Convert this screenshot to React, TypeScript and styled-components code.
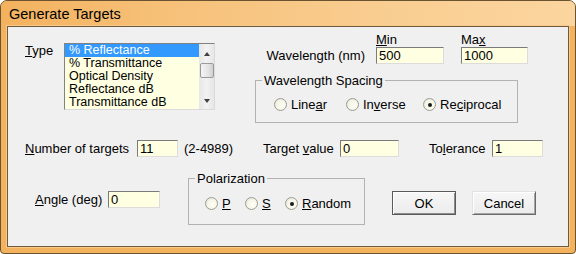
import { FC, ReactNode } from "react";
import styled, { createGlobalStyle } from "styled-components";

const GlobalStyle = createGlobalStyle`
    html, body {
        margin: 0;
        padding: 0;
        background: #ffffff;
    }
    body {
        font-family: "Liberation Sans", Arial, sans-serif;
        font-size: 13px;
        color: #000000;
    }
    * {
        box-sizing: border-box;
    }
`

const Window = styled.div`
    width: 576px;
    height: 254px;
    display: flex;
    flex-direction: column;
    border: 1px solid #6b5331;
    border-radius: 7px 7px 4px 4px;
    background: #f2b25e;
    overflow: hidden;
`

const TitleBar = styled.div`
    height: 25px;
    display: flex;
    align-items: center;
    padding-left: 8px;
    background: linear-gradient(90deg, #f3b25e 0%, #f6bf76 25%, #f9cd90 65%, #fbd59f 100%);
    font-size: 14.5px;
`

const Client = styled.div`
    flex: 1;
    margin: 0 6px 6px 6px;
    border: 1px solid #6e5a3c;
    box-shadow: 0 0 0 1px #f8c98a;
    background: #f0f0f0;
    display: flex;
    flex-direction: column;
`

const Row = styled.div<{ $top: number; $center?: boolean }>`
    display: flex;
    align-items: ${({ $center }) => ($center ? "center" : "flex-start")};
    margin-top: ${({ $top }) => $top}px;
`

const Group = styled.div<{ $left?: number; $top?: number; $column?: boolean }>`
    display: flex;
    flex-direction: ${({ $column }) => ($column ? "column" : "row")};
    align-items: flex-start;
    margin-left: ${({ $left }) => $left ?? 0}px;
    margin-top: ${({ $top }) => $top ?? 0}px;
`

const Label = styled.span<{ $w?: number; $left?: number; $right?: boolean; $h?: number }>`
    display: block;
    width: ${({ $w }) => ($w ? `${$w}px` : "auto")};
    height: ${({ $h }) => $h ?? 17}px;
    line-height: ${({ $h }) => $h ?? 17}px;
    margin-left: ${({ $left }) => $left ?? 0}px;
    text-align: ${({ $right }) => ($right ? "right" : "left")};
    padding-right: ${({ $right }) => ($right ? 11 : 0)}px;
    white-space: nowrap;
`

const TextBox = styled.input<{ $w: number; $left?: number }>`
    width: ${({ $w }) => $w}px;
    height: 17px;
    margin: 0 0 0 ${({ $left }) => $left ?? 0}px;
    padding: 0 0 0 2px;
    font: inherit;
    line-height: 15px;
    color: #000;
    background: #ffffe1;
    border: 1px solid;
    border-color: #7a7a7a #dcdcdc #dcdcdc #7a7a7a;
    outline: none;
`

const ListBox = styled.div`
    width: 151px;
    height: 67px;
    display: flex;
    border: 1px solid;
    border-color: #828282 #dadada #dadada #828282;
    background: #ffffe1;
`

const Items = styled.div`
    flex: 1;
    overflow: hidden;
`

const Item = styled.div<{ $selected?: boolean }>`
    height: 13px;
    line-height: 13px;
    font-size: 12.5px;
    padding-left: 4px;
    white-space: nowrap;
    background: ${({ $selected }) => ($selected ? "#3399ff" : "transparent")};
    color: ${({ $selected }) => ($selected ? "#ffffff" : "#000000")};
`

const ScrollBar = styled.div`
    width: 15px;
    display: flex;
    flex-direction: column;
    align-items: center;
    background: linear-gradient(90deg, #e6e6e6, #f2f2f2 50%, #e6e6e6);
`

const ArrowBox = styled.div<{ $h: number }>`
    height: ${({ $h }) => $h}px;
    width: 100%;
    display: flex;
    align-items: center;
    justify-content: center;
    flex-shrink: 0;
`

const Arrow = styled.div<{ $down?: boolean }>`
    width: 0;
    height: 0;
    border-left: 3.5px solid transparent;
    border-right: 3.5px solid transparent;
    border-top: ${({ $down }) => ($down ? "4px solid #404040" : "0")};
    border-bottom: ${({ $down }) => ($down ? "0" : "4px solid #404040")};
`

const Thumb = styled.div`
    width: 14px;
    height: 15px;
    flex-shrink: 0;
    border: 1px solid #9a9a9a;
    border-radius: 2px;
    background: linear-gradient(90deg, #f4f4f4, #e4e4e4 60%, #cfcfcf);
`

const Spacer = styled.div`
    flex: 1;
`

const GroupBox = styled.fieldset<{ $w: number; $left?: number; $top?: number; $pt: number; $pb: number }>`
    width: ${({ $w }) => $w}px;
    min-width: 0;
    margin: ${({ $top }) => $top ?? 0}px 0 0 ${({ $left }) => $left ?? 0}px;
    padding: ${({ $pt }) => $pt}px 6px ${({ $pb }) => $pb}px 6px;
    border: 1px solid #b2b2b2;
`

const Legend = styled.legend`
    padding: 0 2px;
    line-height: 15px;
    height: 15px;
`

const RadioRow = styled.div<{ $left: number }>`
    display: flex;
    margin-left: ${({ $left }) => $left}px;
`

const RadioItem = styled.label<{ $w?: number }>`
    display: flex;
    align-items: center;
    height: 15px;
    width: ${({ $w }) => ($w ? `${$w}px` : "auto")};
    white-space: nowrap;
`

const RadioDot = styled.span<{ $checked?: boolean }>`
    width: 13px;
    height: 13px;
    margin-right: 4px;
    border-radius: 50%;
    border: 1px solid #9c9c94;
    background: radial-gradient(circle at 60% 60%, #fffff6 0%, #f4f4e6 55%, #d8d8d0 100%);
    display: flex;
    align-items: center;
    justify-content: center;

    &::after {
        content: "";
        width: 4px;
        height: 4px;
        border-radius: 50%;
        background: ${({ $checked }) => ($checked ? "#1a1a1a" : "transparent")};
    }
`

const Button = styled.button<{ $primary?: boolean; $left?: number }>`
    width: 64px;
    height: 24px;
    margin-left: ${({ $left }) => $left ?? 0}px;
    padding: 0;
    font: inherit;
    color: #000;
    background: linear-gradient(#f7f7f7, #ececec);
    border: 1px solid;
    border-color: ${({ $primary }) =>
        $primary ? "#5a5a5a" : "#e2e2e2 #6a6a6a #6a6a6a #e2e2e2"};
    box-shadow: ${({ $primary }) =>
        $primary
            ? "inset 1px 1px #ffffff, inset -1px -1px #8c8c8c"
            : "inset 1px 1px #ffffff, inset -1px -1px #a6a6a6"};
`

interface IRadioProps {
    w?: number,
    checked?: boolean,
    children: ReactNode
}

const Radio: FC<IRadioProps> = ({ w, checked, children }) => (
    <RadioItem $w={w}>
        <RadioDot $checked={checked} />
        <span>{children}</span>
    </RadioItem>
)

const types = ["% Reflectance", "% Transmittance", "Optical Density", "Reflectance dB", "Transmittance dB"];

const App: FC = () => {
    return (
        <>
            <GlobalStyle />
            <Window>
                <TitleBar>Generate Targets</TitleBar>
                <Client>
                    <Row $top={5}>
                        <Group $left={17} $top={11}>
                            <Label $w={39} $h={15}><u>T</u>ype</Label>
                            <ListBox>
                                <Items>
                                    {types.map((t, i) => (
                                        <Item key={t} $selected={i === 0}>{t}</Item>
                                    ))}
                                </Items>
                                <ScrollBar>
                                    <ArrowBox $h={19}><Arrow /></ArrowBox>
                                    <Thumb />
                                    <Spacer />
                                    <ArrowBox $h={16}><Arrow $down /></ArrowBox>
                                </ScrollBar>
                            </ListBox>
                        </Group>
                        <Group $left={40} $column>
                            <Group $left={121}>
                                <Label $w={85} $h={15}><u>M</u>in</Label>
                                <Label $h={15}>Ma<u>x</u></Label>
                            </Group>
                            <Group>
                                <Label $w={121} $right>Wavelength (nm)</Label>
                                <TextBox $w={68} defaultValue="500" />
                                <TextBox $w={67} $left={17} defaultValue="1000" />
                            </Group>
                            <GroupBox $w={263} $top={9} $pt={9} $pb={10}>
                                <Legend>Wavelength Spacing</Legend>
                                <RadioRow $left={12}>
                                    <Radio w={72}>Line<u>a</u>r</Radio>
                                    <Radio w={77}>In<u>v</u>erse</Radio>
                                    <Radio checked>Re<u>c</u>iprocal</Radio>
                                </RadioRow>
                            </GroupBox>
                        </Group>
                    </Row>

                    <Row $top={17} $center>
                        <Label $w={112} $left={17}><u>N</u>umber of targets</Label>
                        <TextBox $w={41} defaultValue="11" />
                        <Label $w={79} $left={6}>(2-4989)</Label>
                        <Label $w={77}>Target <u>v</u>alue</Label>
                        <TextBox $w={59} defaultValue="0" />
                        <Label $w={63} $left={30}>To<u>l</u>erance</Label>
                        <TextBox $w={51} defaultValue="1" />
                    </Row>

                    <Row $top={14}>
                        <Group $left={27} $top={20}>
                            <Label $w={73}><u>A</u>ngle (deg)</Label>
                            <TextBox $w={52} defaultValue="0" />
                        </Group>
                        <GroupBox $w={177} $left={28} $pt={10} $pb={13}>
                            <Legend>Polarization</Legend>
                            <RadioRow $left={10}>
                                <Radio w={40}><u>P</u></Radio>
                                <Radio w={40}><u>S</u></Radio>
                                <Radio checked><u>R</u>andom</Radio>
                            </RadioRow>
                        </GroupBox>
                        <Group $left={27} $top={20}>
                            <Button $primary>OK</Button>
                            <Button $left={16}>Cancel</Button>
                        </Group>
                    </Row>
                </Client>
            </Window>
        </>
    );
}

export default App;
